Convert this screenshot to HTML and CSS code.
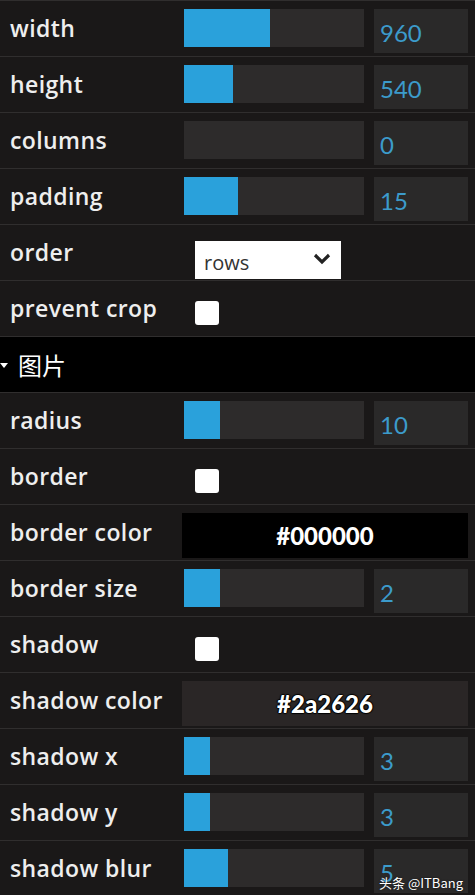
FILE: index.html
```html
<!DOCTYPE html>
<html lang="en">
<head>
    <meta charset="UTF-8">
    <meta name="viewport" content="width=device-width, initial-scale=1.0">
    <title>Gallery Settings</title>
    <link rel="stylesheet" href="styles.css">
</head>
<body>
    <ul class="gui">
        <li class="row">
            <span class="label">width</span>
            <div class="slider"><div class="fill" style="width: 48%"></div></div>
            <div class="number">960</div>
        </li>
        <li class="row">
            <span class="label">height</span>
            <div class="slider"><div class="fill" style="width: 27%"></div></div>
            <div class="number">540</div>
        </li>
        <li class="row">
            <span class="label">columns</span>
            <div class="slider"><div class="fill" style="width: 0%"></div></div>
            <div class="number">0</div>
        </li>
        <li class="row">
            <span class="label">padding</span>
            <div class="slider"><div class="fill" style="width: 30%"></div></div>
            <div class="number">15</div>
        </li>
        <li class="row">
            <span class="label">order</span>
            <div class="select">
                <span>rows</span>
                <svg class="chevron" width="18" height="12" viewBox="0 0 18 12">
                    <polyline points="2,2 9,9 16,2" fill="none" stroke="#222" stroke-width="3.2"/>
                </svg>
            </div>
        </li>
        <li class="row">
            <span class="label">prevent crop</span>
            <div class="checkbox"></div>
        </li>
        <li class="folder">
            <svg class="arrow" width="8" height="6" viewBox="0 0 8 6">
                <polygon points="0,0 8,0 4,5" fill="#fff"/>
            </svg>
            <span>图片</span>
        </li>
        <li class="row">
            <span class="label">radius</span>
            <div class="slider"><div class="fill" style="width: 20%"></div></div>
            <div class="number">10</div>
        </li>
        <li class="row">
            <span class="label">border</span>
            <div class="checkbox"></div>
        </li>
        <li class="row">
            <span class="label">border color</span>
            <div class="color" style="background: #000000">#000000</div>
        </li>
        <li class="row">
            <span class="label">border size</span>
            <div class="slider"><div class="fill" style="width: 20%"></div></div>
            <div class="number">2</div>
        </li>
        <li class="row">
            <span class="label">shadow</span>
            <div class="checkbox"></div>
        </li>
        <li class="row">
            <span class="label">shadow color</span>
            <div class="color" style="background: #2a2626">#2a2626</div>
        </li>
        <li class="row">
            <span class="label">shadow x</span>
            <div class="slider"><div class="fill" style="width: 14.5%"></div></div>
            <div class="number">3</div>
        </li>
        <li class="row">
            <span class="label">shadow y</span>
            <div class="slider"><div class="fill" style="width: 14.5%"></div></div>
            <div class="number">3</div>
        </li>
        <li class="row">
            <span class="label">shadow blur</span>
            <div class="slider"><div class="fill" style="width: 24.5%"></div></div>
            <div class="number">5</div>
        </li>
    </ul>
    <div class="watermark">头条 @ITBang</div>
</body>
</html>
```

FILE: styles.css
```css
body {
    margin: 0;
    background-color: #1a1818;
    font-family: Lato, "Noto Sans", sans-serif;
    overflow: hidden;
}
.gui {
    list-style: none;
    margin: 0;
    padding: 0;
}
.row {
    display: flex;
    align-items: flex-start;
    height: 56px;
    box-sizing: border-box;
    border-top: 1px solid #302e2e;
    padding-top: 8px;
}
.label {
    width: 174px;
    flex: none;
    padding-left: 10px;
    color: #eeeeee;
    font-family: "Open Sans", sans-serif;
    font-weight: 600;
    font-size: 23px;
    line-height: 38px;
    letter-spacing: 0.4px;
    white-space: nowrap;
}
.slider {
    width: 180px;
    height: 38px;
    flex: none;
    background-color: #2d2b2b;
}
.fill {
    height: 100%;
    background-color: #2aa1db;
}
.number {
    width: 94px;
    height: 44px;
    margin-left: 10px;
    box-sizing: border-box;
    padding: 8px 0 0 6px;
    background-color: #2a2929;
    color: #3c9bcb;
    font-size: 24px;
    line-height: 32px;
}
.select {
    display: flex;
    align-items: center;
    justify-content: space-between;
    width: 146px;
    height: 38px;
    margin: 8px 0 0 11px;
    box-sizing: border-box;
    padding: 4px 10px 0 9px;
    background-color: #ffffff;
    color: #333333;
    font-family: "Open Sans", sans-serif;
    font-size: 20px;
}
.chevron {
    margin-top: -6px;
}
.checkbox {
    width: 24px;
    height: 24px;
    margin: 12px 0 0 11px;
    background-color: #ffffff;
    border-radius: 3px;
}
.color {
    width: 286px;
    height: 45px;
    margin-left: -2px;
    color: #ffffff;
    font-weight: 900;
    font-size: 24px;
    line-height: 45px;
    text-align: center;
    text-shadow: 0 1px 1px #000, 0 -1px 1px #000, 1px 0 1px #000, -1px 0 1px #000;
}
.folder {
    display: flex;
    align-items: center;
    gap: 10px;
    height: 56px;
    box-sizing: border-box;
    border-top: 1px solid #302e2e;
    background-color: #000000;
    color: #ffffff;
    font-family: "Noto Sans CJK SC", sans-serif;
    font-size: 24px;
}
.arrow {
    margin-top: 2px;
}
.watermark {
    position: absolute;
    right: 12px;
    bottom: 3px;
    color: #ffffff;
    font-family: "Noto Sans CJK SC", sans-serif;
    font-size: 13px;
    text-shadow: 0 0 2px rgba(0, 0, 0, 0.6);
}
```
